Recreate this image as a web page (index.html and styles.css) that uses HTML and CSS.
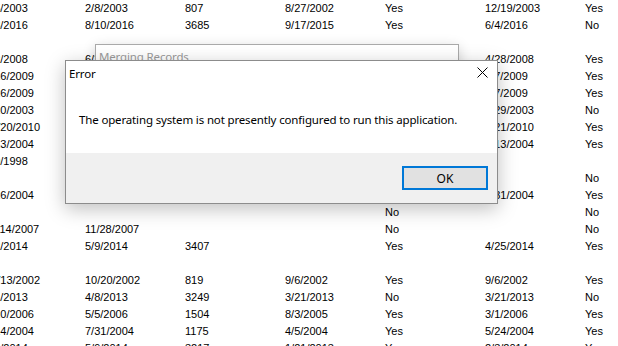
FILE: index.html
```html
<!DOCTYPE html>
<html lang="en">
<head>
  <meta charset="UTF-8">
  <title>Merging Records</title>
  <link rel="stylesheet" href="styles.css">
</head>
<body>
  <div class="list">
    <div class="row"><span>1/5/2003</span><span>2/8/2003</span><span>807</span><span>8/27/2002</span><span>Yes</span><span>12/19/2003</span><span>Yes</span></div>
    <div class="row"><span>7/8/2016</span><span>8/10/2016</span><span>3685</span><span>9/17/2015</span><span>Yes</span><span>6/4/2016</span><span>No</span></div>
    <div class="row"><span></span><span></span><span></span><span></span><span></span><span></span><span></span></div>
    <div class="row"><span>4/2/2008</span><span>6/3/2008</span><span></span><span></span><span></span><span>4/28/2008</span><span>Yes</span></div>
    <div class="row"><span>1/16/2009</span><span></span><span></span><span></span><span></span><span>4/7/2009</span><span>Yes</span></div>
    <div class="row"><span>2/26/2009</span><span></span><span></span><span></span><span></span><span>5/7/2009</span><span>Yes</span></div>
    <div class="row"><span>3/10/2003</span><span></span><span></span><span></span><span></span><span>1/29/2003</span><span>No</span></div>
    <div class="row"><span>10/20/2010</span><span></span><span></span><span></span><span></span><span>3/21/2010</span><span>Yes</span></div>
    <div class="row"><span>2/13/2004</span><span></span><span></span><span></span><span></span><span>7/13/2004</span><span>Yes</span></div>
    <div class="row"><span>5/9/1998</span><span></span><span></span><span></span><span></span><span></span><span></span></div>
    <div class="row"><span></span><span></span><span></span><span></span><span></span><span></span><span>No</span></div>
    <div class="row"><span>1/26/2004</span><span></span><span></span><span></span><span></span><span>5/31/2004</span><span>Yes</span></div>
    <div class="row"><span></span><span></span><span></span><span></span><span>No</span><span></span><span>No</span></div>
    <div class="row"><span>11/14/2007</span><span>11/28/2007</span><span></span><span></span><span>No</span><span></span><span>No</span></div>
    <div class="row"><span>5/2/2014</span><span>5/9/2014</span><span>3407</span><span></span><span>Yes</span><span>4/25/2014</span><span>Yes</span></div>
    <div class="row"><span></span><span></span><span></span><span></span><span></span><span></span><span></span></div>
    <div class="row"><span>12/13/2002</span><span>10/20/2002</span><span>819</span><span>9/6/2002</span><span>Yes</span><span>9/6/2002</span><span>Yes</span></div>
    <div class="row"><span>4/1/2013</span><span>4/8/2013</span><span>3249</span><span>3/21/2013</span><span>No</span><span>3/21/2013</span><span>No</span></div>
    <div class="row"><span>4/10/2006</span><span>5/5/2006</span><span>1504</span><span>8/3/2005</span><span>Yes</span><span>3/1/2006</span><span>Yes</span></div>
    <div class="row"><span>7/14/2004</span><span>7/31/2004</span><span>1175</span><span>4/5/2004</span><span>Yes</span><span>5/24/2004</span><span>Yes</span></div>
    <div class="row"><span>1/2/2014</span><span>5/9/2014</span><span>3217</span><span>1/21/2013</span><span>Yes</span><span>2/3/2014</span><span>Yes</span></div>
  </div>

  <!-- inactive parent window behind the message box -->
  <div class="merge-window">
    <div class="merge-title">Merging Records</div>
  </div>

  <div class="dialog">
    <div class="dialog-title">
      <span>Error</span>
      <svg class="close-icon" width="11" height="11" viewBox="0 0 11 11">
        <path d="M0.5 0.5 L10.5 10.5 M10.5 0.5 L0.5 10.5" stroke="#000" stroke-width="1" fill="none"/>
      </svg>
    </div>
    <div class="dialog-body">The operating system is not presently configured to run this application.</div>
    <div class="dialog-footer">
      <button class="btn-ok">OK</button>
    </div>
  </div>
</body>
</html>
```

FILE: styles.css
```css
* {
  box-sizing: border-box;
  margin: 0;
  padding: 0;
}
body {
  position: relative;
  width: 618px;
  height: 346px;
  overflow: hidden;
  background: #fff;
  font-family: "Liberation Sans", Arial, sans-serif;
}

/* list view in the background */
.list {
  margin-left: -15px;
  font-size: 11px;
  color: #000;
}
.row {
  display: grid;
  grid-template-columns: repeat(7, 100px);
  height: 17px;
  line-height: 17px;
  white-space: nowrap;
}

/* window behind */
.merge-window {
  position: absolute;
  left: 95px;
  top: 44px;
  width: 364px;
  height: 110px;
  background: #fff;
  border: 1px solid #aaa;
  box-shadow: 0 3px 12px rgba(0, 0, 0, 0.18);
}
.merge-title {
  padding: 4px 0 0 3px;
  font-family: "Noto Sans", "Open Sans", sans-serif;
  font-size: 11.5px;
  letter-spacing: -0.15px;
  line-height: 16px;
  color: #9a9a9a;
}

/* message box */
.dialog {
  position: absolute;
  left: 65px;
  top: 60px;
  width: 433px;
  height: 144px;
  display: flex;
  flex-direction: column;
  background: #fff;
  border: 1px solid #8c8c8c;
  box-shadow: 0 5px 18px rgba(0, 0, 0, 0.25);
  font-family: "Noto Sans", "Open Sans", sans-serif;
  font-size: 11.5px;
  letter-spacing: -0.15px;
  color: #000;
}
.dialog-title {
  height: 29px;
  display: flex;
  justify-content: space-between;
  align-items: flex-start;
  padding: 5px 9px 0 3px;
  line-height: 16px;
}
.close-icon {
  margin-top: 1px;
}
.dialog-body {
  height: 63px;
  padding: 22px 0 0 13px;
  line-height: 16px;
}
.dialog-footer {
  flex: 1;
  display: flex;
  justify-content: flex-end;
  align-items: flex-start;
  padding: 13px 9px 0 0;
  background: #f0f0f0;
}
.btn-ok {
  width: 86px;
  height: 24px;
  border: 2px solid #0078d7;
  background: #e1e1e1;
  font-family: inherit;
  font-size: 12px;
  color: #000;
}
```
